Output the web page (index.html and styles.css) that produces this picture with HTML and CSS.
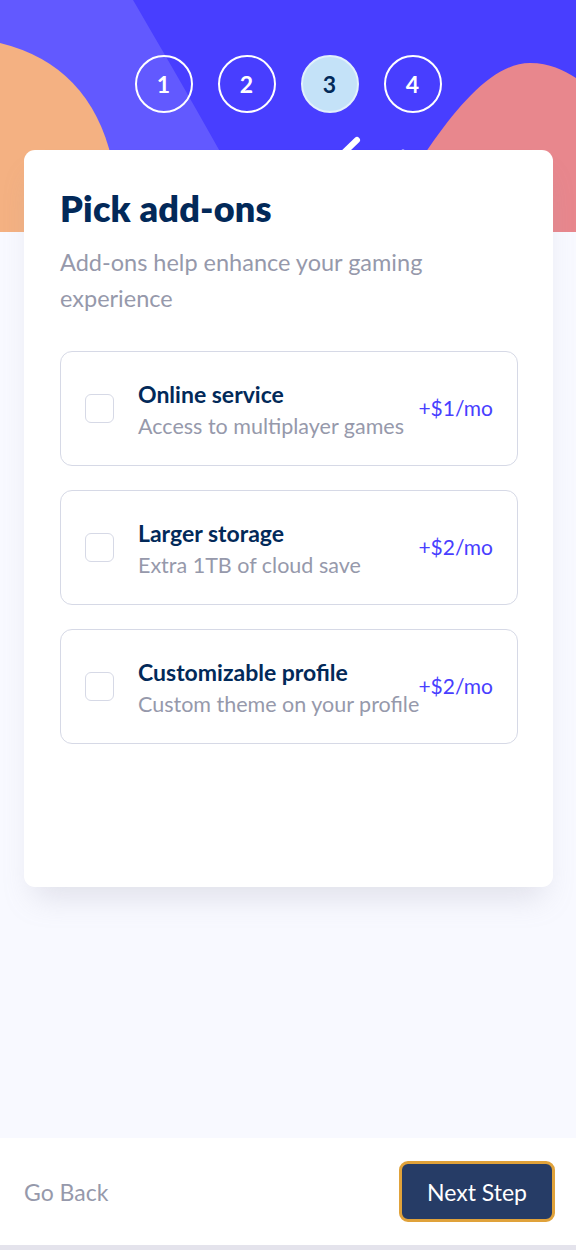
FILE: index.html
```html
<!DOCTYPE html>
<html lang="en">
<head>
<meta charset="utf-8">
<title>Multi-step form – Pick add-ons</title>
<link rel="stylesheet" href="styles.css">
</head>
<body>
<header class="header">
  <svg class="header-bg" viewBox="0 0 576 232" preserveAspectRatio="none" aria-hidden="true">
    <rect width="576" height="232" fill="#483EFF"/>
    <path d="M0 0 H133 C165 55 215 140 264 232 H0 Z" fill="#6259FF"/>
    <path d="M0 43 Q90 65 112 160 L118 232 H0 Z" fill="#F4B182"/>
    <path d="M375 232 C410 180 470 63 530 63 C550 63 563 70 576 78 V232 Z" fill="#E8878D"/>
    <path d="M330 166 L357 140" stroke="#fff" stroke-width="6" stroke-linecap="round" fill="none"/>
    <circle cx="403" cy="152" r="2.5" fill="#fff"/>
  </svg>
  <ol class="steps">
    <li class="step">1</li>
    <li class="step">2</li>
    <li class="step step-active">3</li>
    <li class="step">4</li>
  </ol>
</header>

<main class="main">
  <section class="card">
    <h1 class="title">Pick add-ons</h1>
    <p class="subtitle">Add-ons help enhance your gaming experience</p>
    <ul class="addons">
      <li class="addon">
        <span class="checkbox"></span>
        <div class="addon-text">
          <span class="addon-name">Online service</span>
          <span class="addon-desc">Access to multiplayer games</span>
        </div>
        <span class="addon-price">+$1/mo</span>
      </li>
      <li class="addon">
        <span class="checkbox"></span>
        <div class="addon-text">
          <span class="addon-name">Larger storage</span>
          <span class="addon-desc">Extra 1TB of cloud save</span>
        </div>
        <span class="addon-price">+$2/mo</span>
      </li>
      <li class="addon">
        <span class="checkbox"></span>
        <div class="addon-text">
          <span class="addon-name">Customizable profile</span>
          <span class="addon-desc">Custom theme on your profile</span>
        </div>
        <span class="addon-price">+$2/mo</span>
      </li>
    </ul>
  </section>
</main>

<footer class="footer">
  <button class="btn-back" type="button">Go Back</button>
  <button class="btn-next" type="button">Next Step</button>
</footer>
</body>
</html>
```

FILE: styles.css
```css
* {
  box-sizing: border-box;
}

html, body {
  margin: 0;
  padding: 0;
}

body {
  width: 576px;
  height: 1250px;
  display: flex;
  flex-direction: column;
  background: #F8F9FF;
  font-family: "Lato", "Open Sans", sans-serif;
  color: #022959;
}

.header {
  position: relative;
  height: 232px;
  flex-shrink: 0;
  padding-top: 55px;
}

.header-bg {
  position: absolute;
  inset: 0;
  width: 100%;
  height: 100%;
  display: block;
}

.steps {
  position: relative;
  list-style: none;
  margin: 0;
  padding: 0;
  display: flex;
  justify-content: center;
  gap: 25px;
}

.step {
  width: 58px;
  height: 58px;
  border: 2px solid #fff;
  border-radius: 50%;
  display: flex;
  align-items: center;
  justify-content: center;
  color: #fff;
  font-size: 23px;
  font-weight: 700;
}

.step-active {
  background: #C4E2F8;
  border-color: #E2F0FC;
  color: #022959;
}

.main {
  flex: 1;
  position: relative;
  padding: 0 23px 0 24px;
  margin-top: -82px;
}

.card {
  background: #fff;
  border-radius: 11px;
  height: 737px;
  padding: 34px 35px 0 36px;
  box-shadow: 0 20px 30px -10px rgba(150, 153, 171, 0.25);
}

.title {
  margin: 0;
  font-size: 36px;
  line-height: 48px;
  font-weight: 800;
  color: #022959;
  letter-spacing: 0.2px;
}

.subtitle {
  margin: 12px 0 0;
  font-size: 23.5px;
  line-height: 36px;
  color: #9699AB;
  padding-right: 60px;
}

.addons {
  list-style: none;
  margin: 35px 0 0;
  padding: 0;
  display: flex;
  flex-direction: column;
  gap: 24px;
}

.addon {
  height: 115px;
  border: 1.5px solid #D6D9E6;
  border-radius: 12px;
  display: flex;
  align-items: center;
  padding: 0 24px 0 24px;
}

.checkbox {
  width: 29px;
  height: 29px;
  border: 1.5px solid #D6D9E6;
  border-radius: 6px;
  flex-shrink: 0;
}

.addon-text {
  flex: 1;
  min-width: 0;
  margin-left: 24px;
  padding-top: 2px;
  display: flex;
  flex-direction: column;
  gap: 4px;
  white-space: nowrap;
}

.addon-name {
  font-size: 23px;
  line-height: 28px;
  font-weight: 700;
  color: #022959;
}

.addon-desc {
  font-size: 21.5px;
  line-height: 28px;
  color: #9699AB;
}

.addon-price {
  flex-shrink: 0;
  font-size: 21px;
  color: #483EFF;
  margin-top: -2px;
}

.footer {
  height: 112px;
  flex-shrink: 0;
  background: #fff;
  border-bottom: 5px solid #E4E3EC;
  display: flex;
  align-items: center;
  justify-content: space-between;
  padding: 0 21px 0 24px;
}

.btn-back {
  background: none;
  border: none;
  padding: 0;
  font-family: inherit;
  font-size: 23px;
  color: #9699AB;
  cursor: pointer;
}

.btn-next {
  width: 156px;
  height: 61px;
  background: #263C66;
  border: 3px solid #E0A23A;
  border-radius: 9px;
  font-family: inherit;
  font-size: 23px;
  color: #fff;
  cursor: pointer;
}
```
